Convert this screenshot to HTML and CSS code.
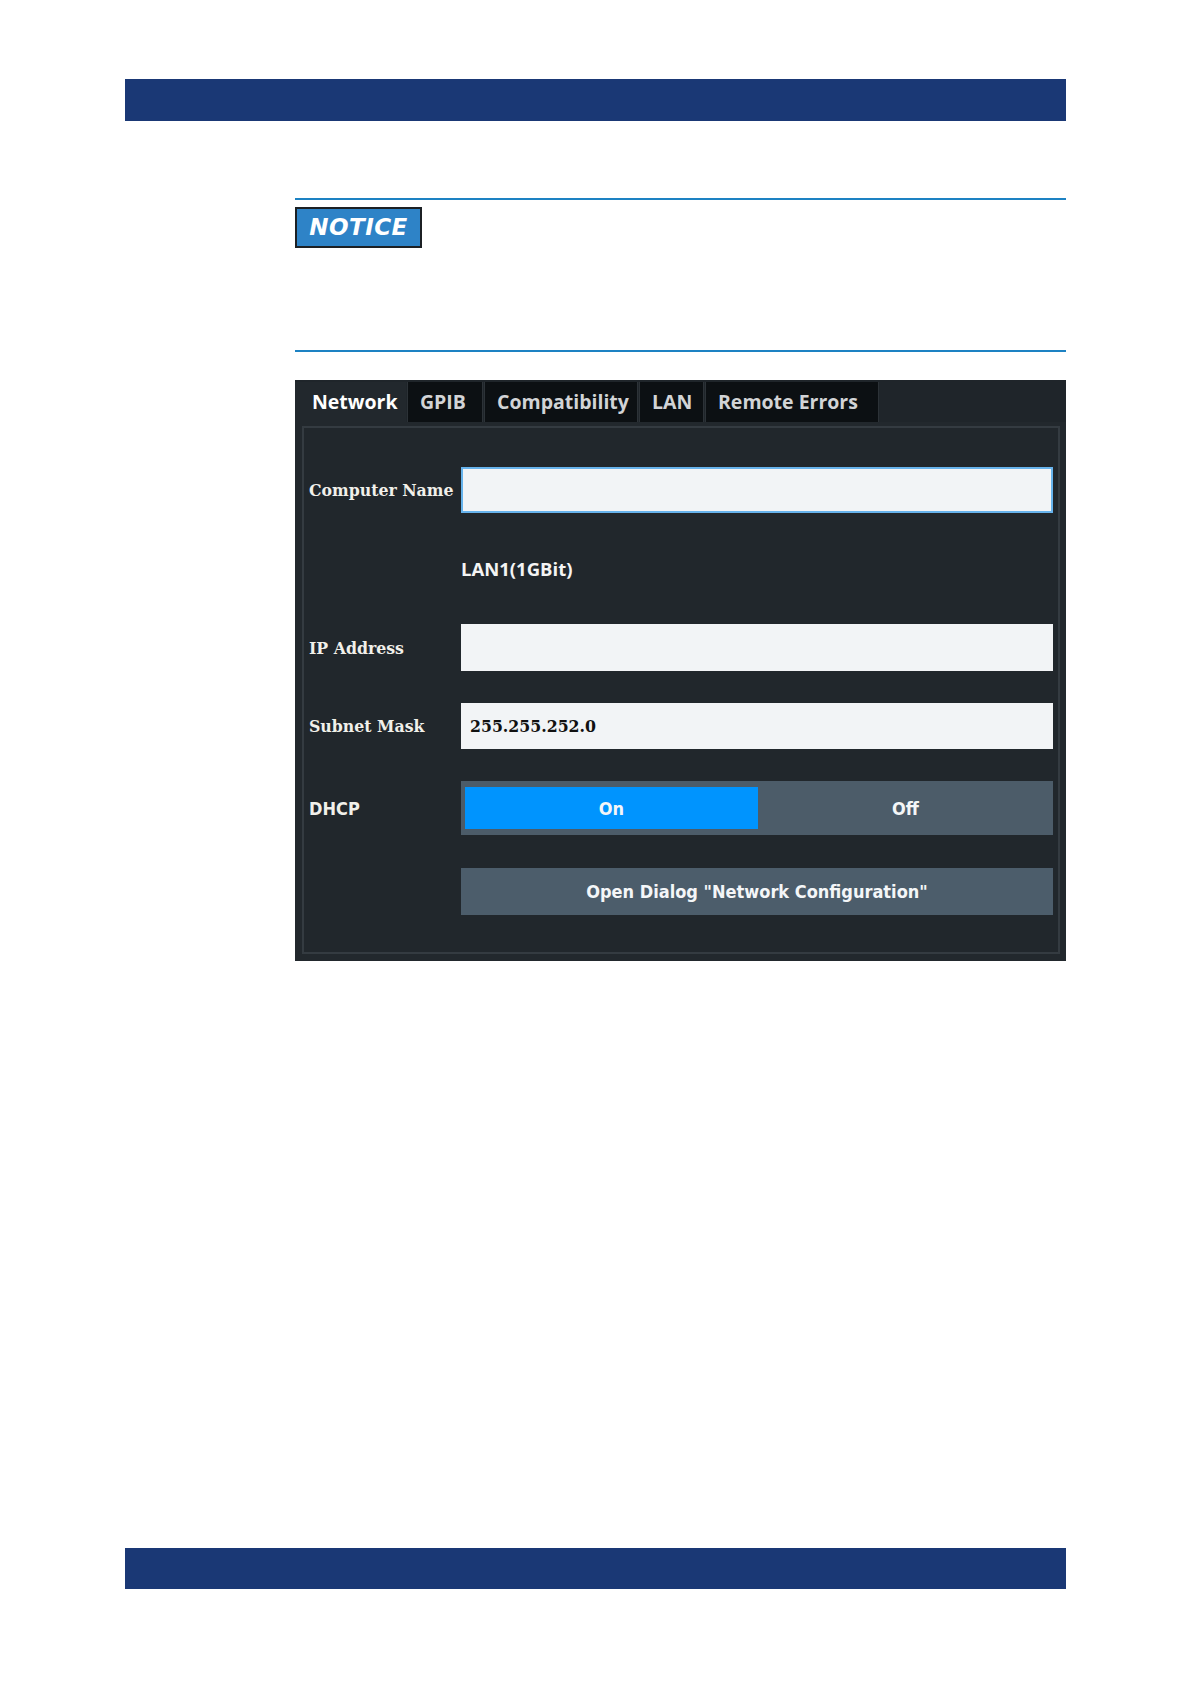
FILE: index.html
```html
<!DOCTYPE html>
<html lang="en">

<head>
    <meta charset="UTF-8">
    <title>Network settings</title>
    <link rel="stylesheet" href="styles.css">
</head>

<body>
    <div class="page">
        <div class="bar"></div>

        <div class="content">
            <div class="rule"></div>
            <div class="notice">NOTICE</div>
            <div class="rule rule-low"></div>

            <div class="dialog">
                <div class="tabs">
                    <span class="tab active">Network</span>
                    <span class="tab tab-gpib">GPIB</span>
                    <span class="tab tab-compat">Compatibility</span>
                    <span class="tab tab-lan">LAN</span>
                    <span class="tab tab-err">Remote Errors</span>
                </div>
                <div class="panel">
                    <div class="form">
                        <label class="lbl">Computer Name</label>
                        <div class="field focus"></div>

                        <span></span>
                        <div class="value">LAN1(1GBit)</div>

                        <label class="lbl">IP Address</label>
                        <div class="field"></div>

                        <label class="lbl">Subnet Mask</label>
                        <div class="field">255.255.252.0</div>

                        <label class="lbl lbl-sans">DHCP</label>
                        <div class="toggle">
                            <span class="opt on">On</span>
                            <span class="opt">Off</span>
                        </div>

                        <span></span>
                        <div class="btn">Open Dialog "Network Configuration"</div>
                    </div>
                </div>
            </div>
        </div>

        <div class="bar bar-bottom"></div>
    </div>
</body>

</html>
```

FILE: styles.css
```css
* {
    padding: 0;
    margin: 0;
    box-sizing: border-box;
}

body {
    background: #fff;
    font-family: "Open Sans", "DejaVu Sans", sans-serif;
}

.page {
    padding: 79px 0 0 125px;
    width: 1066px;
}

.bar {
    height: 42px;
    background: #1a3875;
}

.bar-bottom {
    height: 41px;
    margin-top: 587px;
}

.content {
    padding-left: 170px;
}

.rule {
    height: 2px;
    margin-top: 77px;
    background: #1d82c3;
}

.rule-low {
    margin-top: 102px;
}

.notice {
    margin-top: 7px;
    width: 127px;
    height: 41px;
    border: 2px solid #1c2024;
    background: #2e83c7;
    color: #fff;
    font-family: "DejaVu Sans", sans-serif;
    font-weight: bold;
    font-style: italic;
    font-size: 23px;
    letter-spacing: 0.5px;
    line-height: 36px;
    text-align: center;
}

/* instrument dialog */
.dialog {
    margin-top: 28px;
    height: 581px;
    background: #22282d;
    display: flex;
    flex-direction: column;
}

.tabs {
    height: 42px;
    padding-top: 2px;
    display: flex;
    gap: 1px;
    background: #1f252a;
}

.tab {
    padding-left: 12px;
    background: #0c1013;
    color: #d2d4d6;
    font-weight: bold;
    font-size: 19.5px;
    line-height: 40px;
    white-space: nowrap;
    border-left: 1px solid #2c3237;
    border-right: 1px solid #2c3237;
}

.tab.active {
    width: 111px;
    padding-left: 17px;
    background: #22282d;
    color: #fff;
    border: none;
}

.tab-gpib {
    width: 76px;
}

.tab-compat {
    width: 154px;
}

.tab-lan {
    width: 65px;
}

.tab-err {
    width: 174px;
}

.panel {
    flex: 1;
    margin: 4px 6px 7px 7px;
    border: 2px solid #343b41;
    background: #21272c;
    padding: 39px 5px 38px 5px;
}

.form {
    display: grid;
    grid-template-columns: 152px 1fr;
    grid-template-rows: 46px 47px 47px 46px 54px 47px;
    row-gap: 32px;
    align-items: center;
}

.lbl {
    color: #f1f0ea;
    font-family: "DejaVu Serif", "Liberation Serif", serif;
    font-stretch: condensed;
    font-weight: bold;
    font-size: 17.5px;
    white-space: nowrap;
}

.lbl-sans {
    font-family: "DejaVu Sans", sans-serif;
    font-stretch: condensed;
    font-size: 18px;
}

.field {
    height: 100%;
    background: #f2f4f6;
    color: #111;
    font-family: "DejaVu Serif", "Liberation Serif", serif;
    font-stretch: condensed;
    font-weight: bold;
    font-size: 17.5px;
    padding-left: 9px;
    display: flex;
    align-items: center;
}

.field.focus {
    border: 2px solid #67b3ec;
}

.value {
    color: #f4f4f4;
    font-weight: bold;
    font-size: 18.5px;
}

.toggle {
    height: 100%;
    background: #4c5c69;
    padding: 6px 0 6px 4px;
    display: grid;
    grid-template-columns: 293px 1fr;
}

.opt,
.btn {
    color: #f4f6f8;
    font-family: "DejaVu Sans", sans-serif;
    font-stretch: condensed;
    font-weight: bold;
    font-size: 18px;
    display: flex;
    align-items: center;
    justify-content: center;
}

.opt.on {
    background: #0094fe;
}

.btn {
    height: 100%;
    margin-top: 1px;
    background: #4c5d6b;
}
```
